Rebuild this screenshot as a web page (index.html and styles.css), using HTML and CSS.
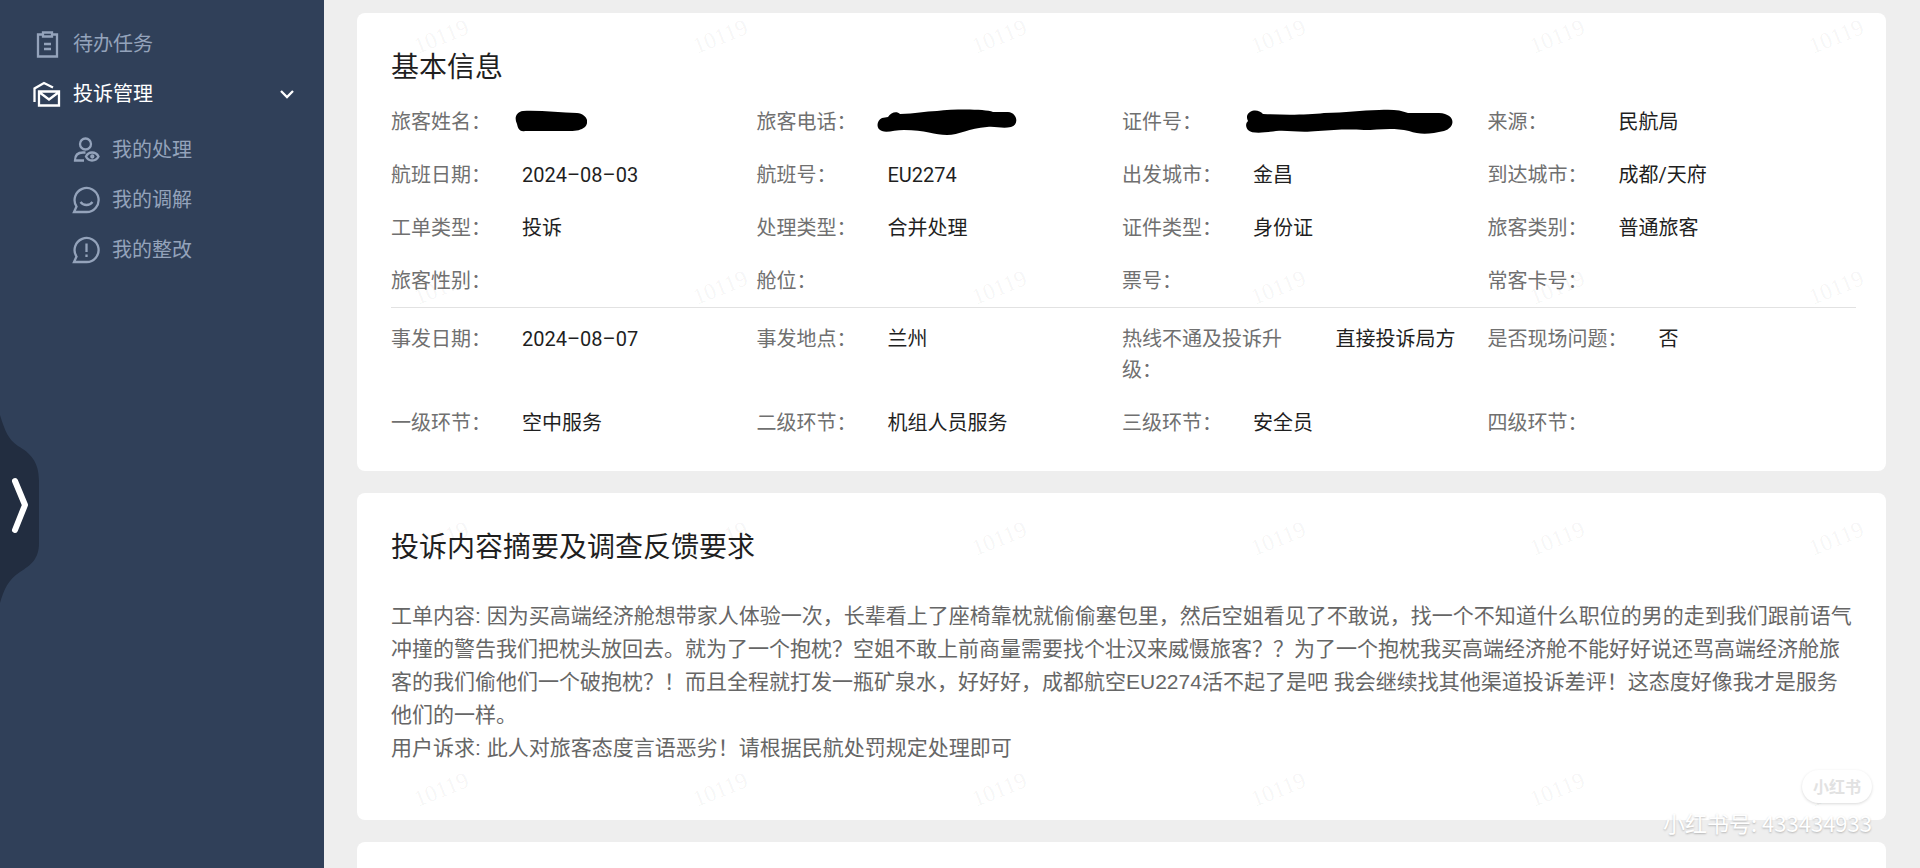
FILE: index.html
```html
<!DOCTYPE html>
<html lang="zh-CN">
<head>
    <meta charset="UTF-8">
    <meta name="viewport" content="width=device-width, initial-scale=1.0">
    <title>投诉管理</title>
    <link rel="stylesheet" href="styles.css">
</head>
<body>
    <nav class="sidebar">
        <ul class="menu">
            <li>
                <a class="menu-item" href="#">
                    <svg class="icon" viewBox="0 0 28 28"><path d="M10 4.500H5v22h19v-22h-5M10 2.500h9v4h-9zM11 14h7M11 19h7"/></svg>
                    <span>待办任务</span>
                </a>
            </li>
            <li>
                <a class="menu-item active" href="#">
                    <svg class="icon" viewBox="0 0 28 28"><path d="M1.500 22V8.500L11 3l9 4.500M6 11.500h20v14H6zM6 12l10 7.500L26 12"/></svg>
                    <span>投诉管理</span>
                    <svg class="arrow" viewBox="0 0 14 10"><path d="M1 2l6 6 6-6"/></svg>
                </a>
                <ul class="submenu">
                    <li>
                        <a class="menu-item" href="#">
                            <svg class="icon" viewBox="0 0 28 28"><circle cx="13.500" cy="8" r="5.500"/><path d="M12 24.500H3c0-5 3-8 8-8h2.500M14 20.500c1.500-3 3.500-4 6-4s5 1 6.500 4c-1.500 3-4 4-6.500 4s-4.500-1-6-4z"/><circle cx="20.300" cy="20.500" r="1"/></svg>
                            <span>我的处理</span>
                        </a>
                    </li>
                    <li>
                        <a class="menu-item" href="#">
                            <svg class="icon" viewBox="0 0 28 28"><path d="M2 26h12.500a12 12 0 1 0-10-5.500zM8.500 16c3 4 9 4 12 0"/></svg>
                            <span>我的调解</span>
                        </a>
                    </li>
                    <li>
                        <a class="menu-item" href="#">
                            <svg class="icon" viewBox="0 0 28 28"><path d="M2 26h12.500a12 12 0 1 0-10-5.500zM14.500 7.500v8.500M14.500 18.500v2.500"/></svg>
                            <span>我的整改</span>
                        </a>
                    </li>
                </ul>
            </li>
        </ul>
        <button class="drawer-handle" type="button" aria-label="展开">
            <svg viewBox="0 0 40 188"><path class="handle-bg" d="M0 0C5 16 8 24 18 31C30 38 39 46 39 66V128C39 144 31 150 20 157C8 165 4 174 0 188Z"/><path class="handle-arrow" d="M15 66l10 24-10 25"/></svg>
        </button>
    </nav>

    <main class="content">
        <section class="card">
            <h2>基本信息</h2>
            <dl class="info">
                <div class="field"><dt>旅客姓名：</dt><dd><svg class="redact" width="72" height="24" viewBox="0 0 72 24"><path d="M8 2C25 1 45 4 62 4C71 5 75 12 70 18C66 21 62 22 55 22H10C5 23 3 20 2 15C-1 9 1 3 8 2Z"/></svg></dd></div>
                <div class="field"><dt>旅客电话：</dt><dd><svg class="redact wide" width="140" height="26" viewBox="0 0 140 26"><path d="M5 9L11 8C14 3 20 2 23 5C38 5 48 2 60 2C78 0 108 0 116 3H131C141 4 142 16 134 18C125 20 119 17 110 18C92 19 82 26 70 26C58 26 48 21 27 21C18 21 10 24 5 22C-1 20-1 12 5 9Z"/></svg></dd></div>
                <div class="field"><dt>证件号：</dt><dd><svg class="redact" width="207" height="26" viewBox="0 0 207 26"><path d="M4 3C9 0 14 2 17 5C38 6 62 6 78 4C100 4 115 1 133 1C146 0 155 1 162 4H193C210 5 210 18 198 22C185 25 174 26 163 22C146 18 132 21 118 21C100 20 88 21 72 22C52 24 44 21 30 22C17 24 6 25 2 21C-1 17 0 14 2 12C0 8 1 5 4 3Z"/></svg></dd></div>
                <div class="field"><dt>来源：</dt><dd>民航局</dd></div>
                <div class="field"><dt>航班日期：</dt><dd>2024–08–03</dd></div>
                <div class="field"><dt>航班号：</dt><dd>EU2274</dd></div>
                <div class="field"><dt>出发城市：</dt><dd>金昌</dd></div>
                <div class="field"><dt>到达城市：</dt><dd>成都/天府</dd></div>
                <div class="field"><dt>工单类型：</dt><dd>投诉</dd></div>
                <div class="field"><dt>处理类型：</dt><dd>合并处理</dd></div>
                <div class="field"><dt>证件类型：</dt><dd>身份证</dd></div>
                <div class="field"><dt>旅客类别：</dt><dd>普通旅客</dd></div>
                <div class="field"><dt>旅客性别：</dt><dd></dd></div>
                <div class="field"><dt>舱位：</dt><dd></dd></div>
                <div class="field"><dt>票号：</dt><dd></dd></div>
                <div class="field"><dt>常客卡号：</dt><dd></dd></div>
            </dl>
            <dl class="info event">
                <div class="field"><dt>事发日期：</dt><dd>2024–08–07</dd></div>
                <div class="field"><dt>事发地点：</dt><dd>兰州</dd></div>
                <div class="field"><dt>热线不通及投诉升级：</dt><dd>直接投诉局方</dd></div>
                <div class="field"><dt>是否现场问题：</dt><dd>否</dd></div>
                <div class="field"><dt>一级环节：</dt><dd>空中服务</dd></div>
                <div class="field"><dt>二级环节：</dt><dd>机组人员服务</dd></div>
                <div class="field"><dt>三级环节：</dt><dd>安全员</dd></div>
                <div class="field"><dt>四级环节：</dt><dd></dd></div>
            </dl>
        </section>

        <section class="card">
            <h2>投诉内容摘要及调查反馈要求</h2>
            <div class="summary">
                <p>工单内容: 因为买高端经济舱想带家人体验一次，长辈看上了座椅靠枕就偷偷塞包里，然后空姐看见了不敢说，找一个不知道什么职位的男的走到我们跟前语气冲撞的警告我们把枕头放回去。就为了一个抱枕？空姐不敢上前商量需要找个壮汉来威慑旅客？？为了一个抱枕我买高端经济舱不能好好说还骂高端经济舱旅客的我们偷他们一个破抱枕？！而且全程就打发一瓶矿泉水，好好好，成都航空EU2274活不起了是吧 我会继续找其他渠道投诉差评！这态度好像我才是服务他们的一样。</p>
                <p>用户诉求: 此人对旅客态度言语恶劣！请根据民航处罚规定处理即可</p>
            </div>
        </section>

        <section class="card"></section>

        <!-- tiled user id over the cards -->
        <div class="watermark" aria-hidden="true">
            <span>10119</span><span>10119</span><span>10119</span><span>10119</span><span>10119</span><span>10119</span>
            <span>10119</span><span>10119</span><span>10119</span><span>10119</span><span>10119</span><span>10119</span>
            <span>10119</span><span>10119</span><span>10119</span><span>10119</span><span>10119</span><span>10119</span>
            <span>10119</span><span>10119</span><span>10119</span><span>10119</span><span>10119</span><span>10119</span>
        </div>
    </main>

    <div class="stamp">
        <span class="stamp-logo">小红书</span>
        <span class="stamp-id">小红书号: 433434933</span>
    </div>
</body>
</html>
```
FILE: styles.css
```css
* {
    box-sizing: border-box;
}
body {
    display: flex;
    height: 100vh;
    margin: 0;
    overflow: hidden;
    background-color: #eee;
    font-family: "Liberation Sans", "Noto Sans CJK SC", sans-serif;
    font-size: 20px;
    line-height: 31px;
}
ul, dl, dd, h2, p {
    margin: 0;
    padding: 0;
}
ul {
    list-style: none;
}

/* sidebar */
.sidebar {
    position: relative;
    flex: none;
    width: 324px;
    padding-top: 19px;
    background-color: #304059;
}
.menu-item {
    display: flex;
    align-items: center;
    gap: 12px;
    height: 50px;
    padding: 0 30px 0 33px;
    color: #94a3bb;
    text-decoration: none;
}
.menu-item.active {
    color: #fff;
}
.submenu {
    padding: 6px 0 0 39px;
}
.icon {
    width: 28px;
    height: 28px;
}
.icon, .arrow {
    flex: none;
    fill: none;
    stroke: currentColor;
    stroke-width: 2.3;
}
.arrow {
    width: 14px;
    height: 10px;
    margin-left: auto;
}
.drawer-handle {
    position: absolute;
    left: 0;
    top: 415px;
    width: 40px;
    height: 188px;
    padding: 0;
    border: 0;
    background: none;
}
.drawer-handle svg {
    display: block;
}
.handle-bg {
    fill: #222d40;
}
.handle-arrow {
    fill: none;
    stroke: #fff;
    stroke-width: 6;
    stroke-linecap: round;
    stroke-linejoin: round;
}

/* cards */
.content {
    position: relative;
    display: flex;
    flex: 1;
    flex-direction: column;
    gap: 22px;
    min-width: 0;
    padding: 13px 34px 0 33px;
    overflow: hidden;
}
.card {
    flex: none;
    min-height: 100px;
    padding: 35px 30px 32px 34px;
    border-radius: 8px;
    background-color: #fff;
}
h2 {
    color: #1f1f1f;
    font-size: 28px;
    font-weight: normal;
    line-height: 40px;
}
.info {
    display: grid;
    grid-template-columns: repeat(4, 1fr);
    row-gap: 22px;
    margin-top: 19px;
    padding-right: 3px;
}
.info.event {
    margin-top: 10px;
    padding-top: 16px;
    border-top: 1px solid #e2e2e2;
}
.field {
    display: flex;
    gap: 31px;
    padding-right: 32px;
}
dt {
    min-width: 100px;
    color: #707070;
}
dd {
    flex: none;
    color: #1f1f1f;
    font-family: Roboto, "Noto Sans CJK SC", sans-serif;
}
/* the strokes overhang the value on both sides */
.redact {
    display: block;
    margin: 2px -30px 0 -7px;
}
.redact.wide {
    margin-left: -11px;
}
.summary {
    margin: 31px 0 24px;
    color: #666;
    font-size: 21px;
    line-height: 33px;
}

/* overlays */
.watermark {
    position: absolute;
    left: -22px;
    top: -89px;
    display: grid;
    grid-template-columns: repeat(6, 279px);
    grid-auto-rows: 251px;
    place-items: center;
    color: rgba(0, 0, 0, 0.05);
    font-family: "Liberation Serif", serif;
    font-size: 23px;
    pointer-events: none;
}
.watermark span {
    transform: rotate(-22deg);
}
.stamp {
    position: absolute;
    right: 48px;
    bottom: 30px;
    display: flex;
    flex-direction: column;
    align-items: flex-end;
    gap: 4px;
    font-family: "Noto Sans CJK SC", sans-serif;
}
.stamp-logo {
    padding: 0 11px;
    border-radius: 17px;
    background-color: #fff;
    box-shadow: 0 1px 3px rgba(0, 0, 0, 0.15);
    color: #e2e2e2;
    font-size: 16px;
    font-weight: bold;
    line-height: 33px;
}
.stamp-id {
    color: #fff;
    font-size: 22px;
    text-shadow: 0 1px 2px rgba(0, 0, 0, 0.25);
}
```
